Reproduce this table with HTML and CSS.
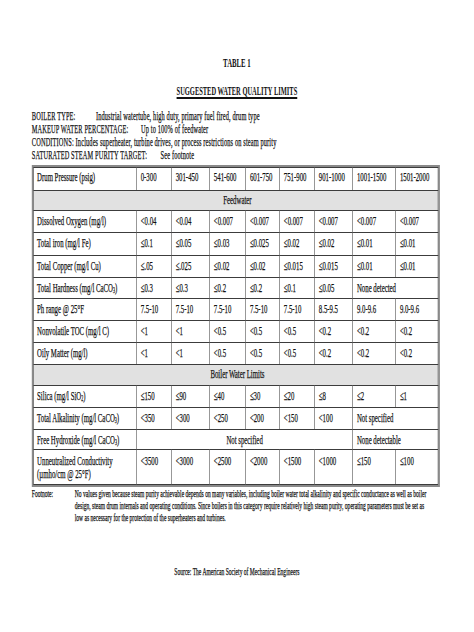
FILE: index.html
```html
<!DOCTYPE html>
<html lang="en">
<head>
<meta charset="utf-8">
<title>Table 1 - Suggested Water Quality Limits</title>
<link rel="stylesheet" href="styles.css">
</head>
<body>
<div class="frame">
<div class="page">
  <h1 class="title">TABLE 1</h1>
  <h2 class="subtitle">SUGGESTED WATER QUALITY LIMITS</h2>

  <div class="meta">
    <div class="meta-line"><span class="label w-boiler">BOILER TYPE:</span><span>Industrial watertube, high duty, primary fuel fired, drum type</span></div>
    <div class="meta-line"><span class="label w-makeup">MAKEUP WATER PERCENTAGE:</span><span>Up to 100% of feedwater</span></div>
    <div class="meta-line"><span>CONDITIONS: Includes superheater, turbine drives, or process restrictions on steam purity</span></div>
    <div class="meta-line"><span class="label w-sat">SATURATED STEAM PURITY TARGET:</span><span>See footnote</span></div>
  </div>

  <table class="limits">
    <colgroup>
      <col class="c-name">
      <col class="c-a"><col class="c-b"><col class="c-c"><col class="c-d">
      <col class="c-e"><col class="c-f"><col class="c-g"><col class="c-h">
    </colgroup>
    <tbody>
      <tr class="r-head">
        <td>Drum Pressure (psig)</td><td>0-300</td><td>301-450</td><td>541-600</td><td>601-750</td><td>751-900</td><td>901-1000</td><td>1001-1500</td><td>1501-2000</td>
      </tr>
      <tr class="r-section">
        <td colspan="9">Feedwater</td>
      </tr>
      <tr class="r-data">
        <td>Dissolved Oxygen (mg/l)</td><td>&lt;0.04</td><td>&lt;0.04</td><td>&lt;0.007</td><td>&lt;0.007</td><td>&lt;0.007</td><td>&lt;0.007</td><td>&lt;0.007</td><td>&lt;0.007</td>
      </tr>
      <tr class="r-data r-tall">
        <td>Total iron (mg/l Fe)</td><td>≤0.1</td><td>≤0.05</td><td>≤0.03</td><td>≤0.025</td><td>≤0.02</td><td>≤0.02</td><td>≤0.01</td><td>≤0.01</td>
      </tr>
      <tr class="r-data">
        <td>Total Copper (mg/l Cu)</td><td>≤.05</td><td>≤.025</td><td>≤0.02</td><td>≤0.02</td><td>≤0.015</td><td>≤0.015</td><td>≤0.01</td><td>≤0.01</td>
      </tr>
      <tr class="r-data r-short">
        <td>Total Hardness (mg/l CaCO<sub>3</sub>)</td><td>≤0.3</td><td>≤0.3</td><td>≤0.2</td><td>≤0.2</td><td>≤0.1</td><td>≤0.05</td><td colspan="2">None detected</td>
      </tr>
      <tr class="r-data">
        <td>Ph range @ 25°F</td><td>7.5-10</td><td>7.5-10</td><td>7.5-10</td><td>7.5-10</td><td>7.5-10</td><td>8.5-9.5</td><td>9.0-9.6</td><td>9.0-9.6</td>
      </tr>
      <tr class="r-data">
        <td>Nonvolatile TOC (mg/l C)</td><td>&lt;1</td><td>&lt;1</td><td>&lt;0.5</td><td>&lt;0.5</td><td>&lt;0.5</td><td>&lt;0.2</td><td>&lt;0.2</td><td>&lt;0.2</td>
      </tr>
      <tr class="r-data">
        <td>Oily Matter (mg/l)</td><td>&lt;1</td><td>&lt;1</td><td>&lt;0.5</td><td>&lt;0.5</td><td>&lt;0.5</td><td>&lt;0.2</td><td>&lt;0.2</td><td>&lt;0.2</td>
      </tr>
      <tr class="r-section r-section-b">
        <td colspan="9">Boiler Water Limits</td>
      </tr>
      <tr class="r-data">
        <td>Silica (mg/l SiO<sub>2</sub>)</td><td>≤150</td><td>≤90</td><td>≤40</td><td>≤30</td><td>≤20</td><td>≤8</td><td>≤2</td><td>≤1</td>
      </tr>
      <tr class="r-data">
        <td>Total Alkalinity (mg/l CaCO<sub>3</sub>)</td><td>&lt;350</td><td>&lt;300</td><td>&lt;250</td><td>&lt;200</td><td>&lt;150</td><td>&lt;100</td><td colspan="2">Not specified</td>
      </tr>
      <tr class="r-data r-hydroxide">
        <td>Free Hydroxide (mg/l CaCO<sub>3</sub>)</td><td colspan="6" class="center">Not specified</td><td colspan="2">None detectable</td>
      </tr>
      <tr class="r-data r-double">
        <td>Unneutralized Conductivity<br>(µmho/cm @ 25°F)</td><td>&lt;3500</td><td>&lt;3000</td><td>&lt;2500</td><td>&lt;2000</td><td>&lt;1500</td><td>&lt;1000</td><td>≤150</td><td>≤100</td>
      </tr>
    </tbody>
  </table>

  <div class="footnote">
    <span class="fn-label">Footnote:</span>
    <p class="fn-text">No values given because steam purity achievable depends on many variables, including boiler water total alkalinity and specific conductance as well as boiler<br>design, steam drum internals and operating conditions. Since boilers in this category require relatively high steam purity, operating parameters must be set as<br>low as necessary for the protection of the superheaters and turbines.</p>
  </div>

  <p class="source">Source: The American Society of Mechanical Engineers</p>
</div>
</div>
</body>
</html>
```

FILE: styles.css
```css
html, body {
  margin: 0;
  padding: 0;
  width: 474px;
  background: #ffffff;
  overflow: hidden;
}

.frame {
  width: 474px;
  height: 632px;
  overflow: hidden;
}

/* The source document is a horizontally compressed Times layout:
   everything is set at natural size and squeezed to 53% width. */
.page {
  box-sizing: border-box;
  width: 894px;
  padding: 56px 0 0 60px;
  transform: scaleX(0.53);
  transform-origin: 0 0;
  font-family: "Liberation Serif", "Times New Roman", serif;
  color: #111111;
  font-size: 12.8px;
  -webkit-text-stroke: 0.25px #111111;
}

.title {
  margin: 0;
  padding-right: 60px;
  font-size: 12.8px;
  line-height: 14px;
  font-weight: bold;
  text-align: center;
  -webkit-text-stroke: 0;
}

.subtitle {
  margin: 14px 0 0;
  padding-right: 60px;
  font-size: 12.2px;
  line-height: 14px;
  font-weight: bold;
  text-align: center;
  text-decoration: underline;
  text-decoration-thickness: 1.5px;
  text-underline-offset: 2px;
  -webkit-text-stroke: 0;
}

.meta {
  margin-top: 12px;
  font-size: 12px;
  line-height: 13px;
  letter-spacing: 0.25px;
}

.meta-line {
  display: flex;
  white-space: nowrap;
}

.label { flex: none; }
.w-boiler { width: 121px; }
.w-makeup { width: 206px; }
.w-sat { width: 243px; }

.limits {
  margin-top: 3px;
  width: 764px;
  table-layout: fixed;
  border-collapse: separate;
  border-spacing: 0;
  border-style: solid;
  border-color: #8a8a8a;
  border-width: 2px 3.8px;
  font-size: 12.8px;
  line-height: 13px;
}

.c-name { width: 194px; }
.c-a { width: 66px; }
.c-b { width: 72px; }
.c-c { width: 68px; }
.c-d { width: 64px; }
.c-e { width: 66px; }
.c-f { width: 72px; }
.c-g { width: 81px; }
.c-h { width: 81px; }

.limits td {
  box-sizing: border-box;
  padding: 4px 0 0 7.5px;
  vertical-align: top;
  white-space: nowrap;
  border-style: solid;
  border-color: #3c3c3c;
  border-width: 1px 0 0 1.9px;
}

.limits td:last-child { border-right-width: 1.9px; }
.limits tr:last-child td { border-bottom-width: 1px; }
.limits td:first-child { padding-left: 6px; }

.limits sub {
  font-size: 7.5px;
  line-height: 0;
  vertical-align: -1px;
}

.r-head td { height: 23px; padding-top: 3px; }
.r-data td { height: 22px; }
.r-tall td { height: 23px; }
.r-short td { height: 21px; }
.r-hydroxide td { height: 20px; }
.r-double td { height: 36px; padding-top: 5px; }

.r-section td {
  height: 20px;
  padding: 3px 0 0 0;
  text-align: center;
  background: #e1e1e1;
}
.r-section-b td { height: 21px; }

.limits td.center {
  text-align: center;
  padding-left: 0;
}

.footnote {
  display: flex;
  margin-top: 1px;
  font-size: 10.5px;
  line-height: 12px;
}

.fn-label {
  flex: none;
  width: 81px;
}

.fn-text {
  margin: 0;
  white-space: nowrap;
}

.source {
  margin: 42px 0 0;
  padding-right: 60px;
  font-size: 10.5px;
  line-height: 12px;
  text-align: center;
}
```
